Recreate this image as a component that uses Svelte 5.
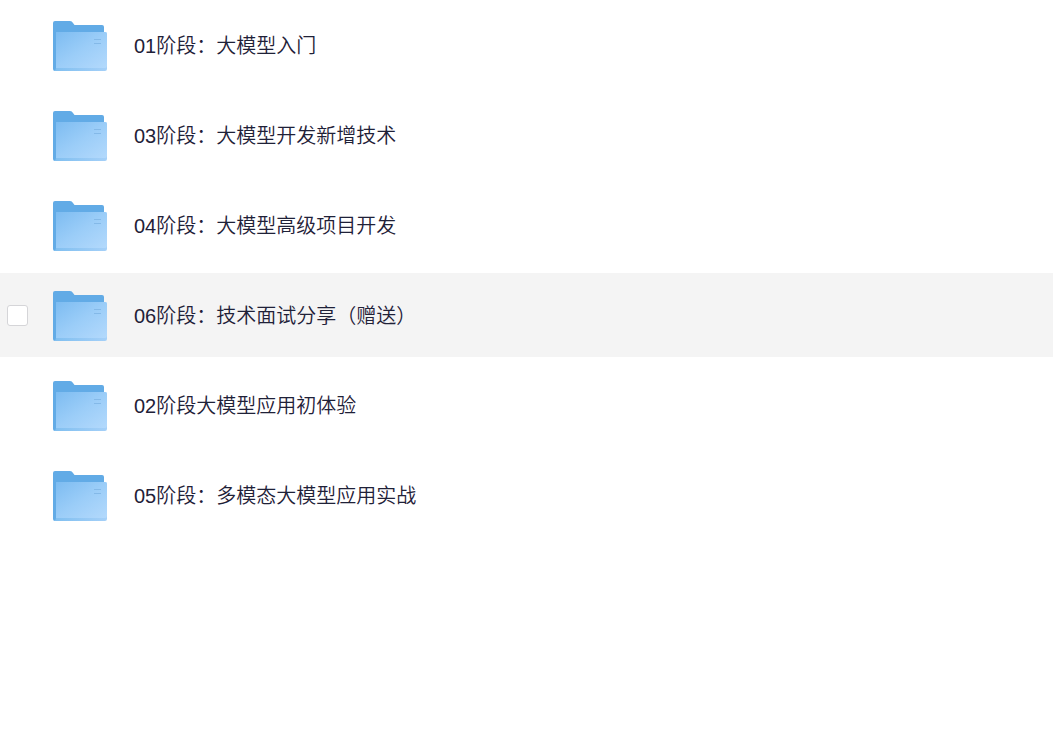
<script>
	let folders = [
		{ id: 1, name: "01阶段：大模型入门" },
		{ id: 3, name: "03阶段：大模型开发新增技术" },
		{ id: 4, name: "04阶段：大模型高级项目开发" },
		{ id: 6, name: "06阶段：技术面试分享（赠送）" },
		{ id: 2, name: "02阶段大模型应用初体验" },
		{ id: 5, name: "05阶段：多模态大模型应用实战" }
	];

	let active = 6;
	let selected = [];
</script>

<!-- gradients shared by every folder icon -->
<svg class="defs" width="0" height="0" aria-hidden="true">
	<defs>
		<linearGradient id="folder-front" x1="0" y1="0" x2="1" y2="1">
			<stop offset="0" stop-color="#7dbcf1" />
			<stop offset="0.5" stop-color="#9bcdf8" />
			<stop offset="1" stop-color="#b3d9fc" />
		</linearGradient>
		<linearGradient id="folder-edge" x1="0" y1="0" x2="1" y2="0">
			<stop offset="0" stop-color="#80bff0" />
			<stop offset="1" stop-color="#a5d0f8" />
		</linearGradient>
	</defs>
</svg>

<ul class="list">
	{#each folders as folder (folder.id)}
		<li class="row" class:active={folder.id === active} on:mouseenter={() => (active = folder.id)}>
			<input
				type="checkbox"
				id="folder-{folder.id}"
				value={folder.id}
				bind:group={selected}
			/>
			<label for="folder-{folder.id}">
				<svg class="icon" viewBox="0 0 54 50" aria-hidden="true">
					<path d="M0 2Q0 0 2 0H17Q19 0 20 2L21.500 4H49Q51 4 51 6V46H3V50H2Q0 50 0 48Z" fill="#62abe6" />
					<path d="M3 11H52Q54 11 54 13V48Q54 50 52 50H1Q3 49 3 47Z" fill="url(#folder-edge)" />
					<path d="M3 11H52Q54 11 54 13V45Q54 47 52 47H3Z" fill="url(#folder-front)" />
					<path d="M41 18.500H48M41 22.500H48" stroke="#84b9e8" />
				</svg>
				<span class="name">{folder.name}</span>
			</label>
		</li>
	{/each}
</ul>

<style>
	:global(body) {
		background-color: #fff;
	}
	.defs {
		display: block;
	}
	.list {
		display: flex;
		flex-direction: column;
		gap: 6px;
		margin: 0;
		padding: 3px 0;
		list-style: none;
	}
	.row {
		display: flex;
		align-items: center;
		gap: 25px;
		height: 84px;
		padding: 0 7px;
	}
	.active {
		background-color: #f4f4f4;
	}
	input {
		appearance: none;
		flex: none;
		width: 21px;
		height: 21px;
		margin: 0;
		background-color: #fff;
		border: 1px solid #d5d5d8;
		border-radius: 3px;
		opacity: 0;
		cursor: pointer;
	}
	.active input,
	input:checked,
	input:focus-visible {
		opacity: 1;
	}
	input:checked {
		background-color: #62abe6;
	}
	label {
		display: flex;
		flex: 1;
		align-items: center;
		gap: 27px;
		padding-top: 2px;
		cursor: pointer;
	}
	.icon {
		flex: none;
		width: 54px;
		height: 50px;
	}
	.name {
		color: #1f2138;
		font-family: "Liberation Sans", "Noto Sans CJK SC", sans-serif;
		font-size: 20px;
		font-weight: 350;
		line-height: 28px;
	}
</style>
